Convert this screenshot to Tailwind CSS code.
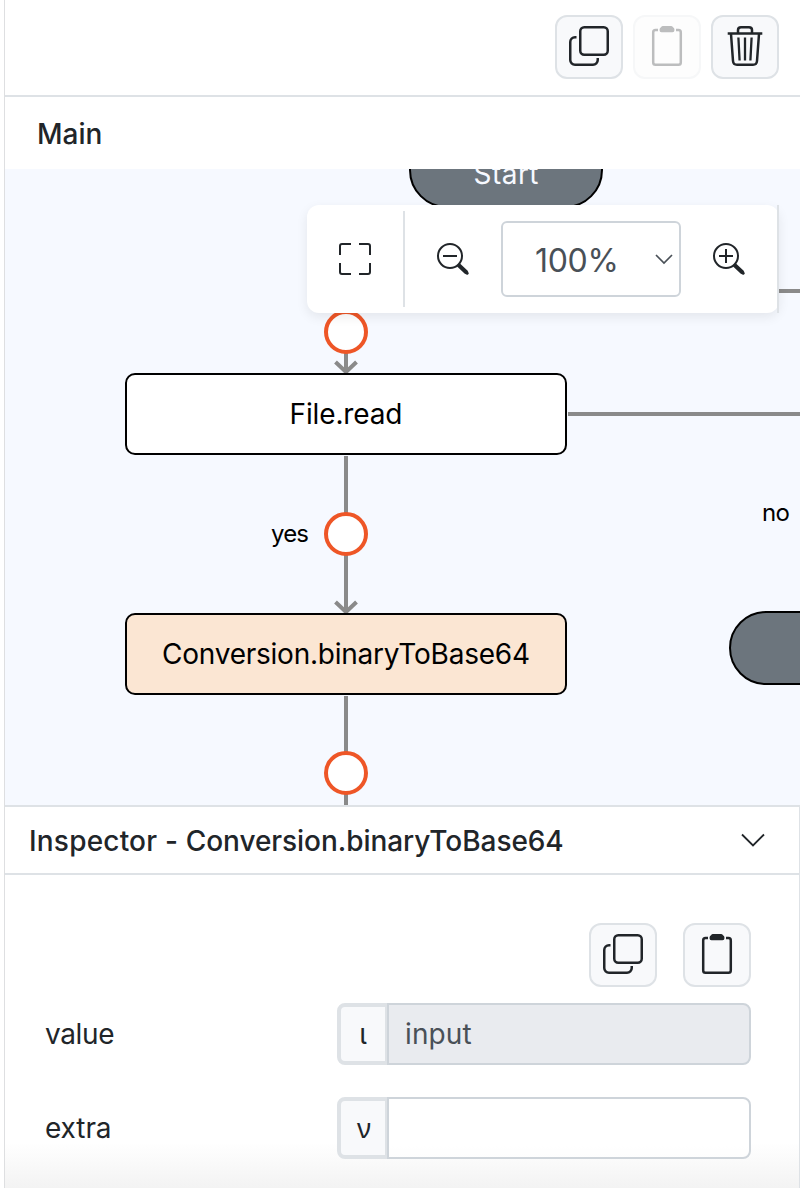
<!DOCTYPE html>
<html lang="en">
<head>
<meta charset="utf-8">
<title>Flow editor</title>
<script src="https://cdn.jsdelivr.net/npm/@tailwindcss/browser@4"></script>
</head>
<body class="bg-white">
<svg class="hidden">
  <defs>
    <symbol id="copy" viewBox="0 0 40 40">
      <g fill="none" stroke="currentColor" stroke-width="2.5">
        <rect x="11.25" y="1.25" width="27.5" height="27.5" rx="4"/>
        <path d="M7.5 11.250H6A4.750 4.750 0 0 0 1.250 16V34A4.750 4.750 0 0 0 6 38.750H24A4.750 4.750 0 0 0 28.750 34V32"/>
      </g>
    </symbol>
    <symbol id="clipboard" viewBox="0 0 40 40">
      <path d="M11 4H8.500Q6.200 4 6.200 6.500V36.500Q6.200 38.750 8.500 38.750H31.500Q33.800 38.750 33.800 36.500V6.500Q33.800 4 31.500 4H29" fill="none" stroke="currentColor" stroke-width="2.500"/>
      <path d="M16 0H24Q25.300 0 26 1.300Q27.500 2 27.500 4Q27.500 6.300 25.500 6.300H14.500Q12.500 6.300 12.500 4Q12.500 2 14 1.300Q14.700 0 16 0Z" fill="currentColor"/>
    </symbol>
  </defs>
</svg>
<div class="flex h-[1188px] w-[800px] overflow-hidden bg-white pl-1 font-[Inter,sans-serif] text-[#212529]">
  <div class="flex w-[796px] flex-col border-l border-[#dedfe1]">
    <header class="flex h-[97px] shrink-0 items-start justify-end gap-2.5 border-b-2 border-[#dee2e6] pt-[15px] pr-[21px]">
      <button class="flex h-16 w-[68px] items-center justify-center rounded-xl border-2 border-[#dee2e6] bg-[#f8f9fb] pb-0.5"><svg class="size-10"><use href="#copy"/></svg></button>
      <button class="flex h-16 w-[68px] items-center justify-center rounded-xl border-2 border-[#f6f7f8] bg-[#fdfdfd] pb-0.5 text-[#bcbdbe]"><svg class="size-10"><use href="#clipboard"/></svg></button>
      <button class="flex h-16 w-[68px] items-center justify-center rounded-xl border-2 border-[#dee2e6] bg-[#f8f9fb] pb-0.5">
        <svg class="size-10" viewBox="0 0 40 40" fill="none" stroke="currentColor" stroke-width="2.500">
          <path d="M2.700 7.600H37.300"/>
          <path d="M13 7.500V4Q13 1.250 16 1.250H24Q27 1.250 27 4V7.500"/>
          <path d="M6 8L8 35Q8.300 38.750 12 38.750H28Q31.700 38.750 32 35L34 8"/>
          <path d="M13.400 11.500L14.600 34.500M20 11.500V34.500M26.600 11.500L25.400 34.500" stroke-width="2.300"/>
        </svg>
      </button>
    </header>
    <div class="flex h-[72px] shrink-0 items-center pt-0.5 pl-8 text-[28px] font-medium">Main</div>

    <main class="relative h-[636px] shrink-0 overflow-hidden bg-[#f6f9ff]">
      <svg class="block" width="795" height="636" viewBox="5 169 795 636" font-family="Inter, sans-serif">
        <rect x="410" y="133" width="192" height="74" rx="37" fill="#6c757d" stroke="#000" stroke-width="2"/>
        <text x="473.500" y="184" font-size="28" fill="#f6f9ff" textLength="65" lengthAdjust="spacing">Start</text>
        <g stroke="#8a8a8a" stroke-width="4" fill="none">
          <path d="M770 291H800M568 414H800"/>
          <path d="M346 350V374M335.500 362L346 372L356.500 362"/>
          <path d="M346 456V614M335.500 602L346 612L356.500 602"/>
          <path d="M346 696V805"/>
        </g>
        <g fill="#fff" stroke="#ee5627" stroke-width="4">
          <circle cx="346" cy="332" r="20"/>
          <circle cx="346" cy="534" r="20"/>
          <circle cx="346" cy="773" r="20"/>
        </g>
        <g stroke="#000" stroke-width="2">
          <rect x="126" y="374" width="440" height="80" rx="9" fill="#fff"/>
          <rect x="126" y="614" width="440" height="80" rx="9" fill="#fbe6d3"/>
          <rect x="730" y="612" width="192" height="72" rx="36" fill="#6c757d"/>
        </g>
        <text x="289.500" y="424" font-size="28" textLength="113" lengthAdjust="spacing">File.read</text>
        <text x="162" y="664" font-size="28" textLength="368" lengthAdjust="spacing">Conversion.binaryToBase64</text>
        <text x="271" y="542" font-size="24" textLength="38" lengthAdjust="spacing">yes</text>
        <text x="762" y="521" font-size="24" textLength="28" lengthAdjust="spacing">no</text>
      </svg>
      <div class="absolute top-9 left-[302px] flex h-[108px] w-[472px] items-center rounded-xl bg-white shadow-[0_4px_12px_rgba(0,0,0,0.08)]">
        <div class="flex h-24 w-[98px] items-center justify-center border-r-2 border-[#dee2e6]">
          <svg class="size-8" viewBox="0 0 32 32" fill="none" stroke="currentColor" stroke-width="2"><path d="M1 12V3Q1 1 3 1H12M20 1H29Q31 1 31 3V12M31 20V29Q31 31 29 31H20M12 31H3Q1 31 1 29V20"/></svg>
        </div>
        <div class="flex w-24 justify-center"><svg class="size-8" viewBox="0 0 32 32" fill="none" stroke="currentColor" stroke-width="2"><circle cx="13" cy="13" r="12"/><path d="M6 13H20"/><path d="M21.500 22L29.800 29.800" stroke-width="4.200"/><path d="M29 29L30.200 30.200" stroke-width="3" stroke-linecap="round"/></svg></div>
        <div class="flex h-[76px] w-[180px] items-center justify-between rounded-md border-2 border-[#ced4da] pr-[6px] pl-8 text-[32px] text-[#495057]"><span class="pt-[3px] tracking-[-0.3px]">100%</span>
          <svg class="h-3 w-[18px]" viewBox="0 0 18 12" fill="none" stroke="#495057" stroke-width="1.700"><path d="M1 2L9 10L17 2"/></svg>
        </div>
        <div class="flex w-24 justify-center"><svg class="size-8" viewBox="0 0 32 32" fill="none" stroke="currentColor" stroke-width="2"><circle cx="13" cy="13" r="12"/><path d="M6 13H20M13 6V20"/><path d="M21.500 22L29.800 29.800" stroke-width="4.200"/><path d="M29 29L30.200 30.200" stroke-width="3" stroke-linecap="round"/></svg></div>
        <div class="absolute top-0 right-0 h-[108px] w-0.5 bg-[#dee2e6]"></div>
      </div>
    </main>

    <section class="flex h-[383px] shrink-0 flex-col border-t-2 border-r border-[#dee2e6] bg-linear-to-b from-white from-[88%] to-[#f3f3f3]">
      <div class="flex h-[68px] shrink-0 items-center justify-between border-b-2 border-[#dee2e6] pr-[34px] pl-6">
        <h2 class="pt-px text-[28px] font-medium whitespace-nowrap"><span class="tracking-[0.2px]">Inspector - </span><span class="tracking-[-0.06px]">Conversion.binaryToBase64</span></h2>
        <svg class="h-3.5 w-6" viewBox="0 0 24 14" fill="none" stroke="currentColor" stroke-width="1.800"><path d="M1 1.500L12 12.500L23 1.500"/></svg>
      </div>
      <div class="flex flex-col pt-12 pr-12 pl-10">
        <div class="flex justify-end gap-[26px]">
          <button class="flex h-16 w-[68px] items-center justify-center rounded-xl border-2 border-[#dee2e6] bg-[#f8f9fb] pb-0.5"><svg class="size-10"><use href="#copy"/></svg></button>
          <button class="flex h-16 w-[68px] items-center justify-center rounded-xl border-2 border-[#dee2e6] bg-[#f8f9fb] pb-0.5"><svg class="size-10"><use href="#clipboard"/></svg></button>
        </div>
        <div class="mt-4 flex h-[62px] items-center">
          <label class="w-[292px] text-[28px] tracking-[-0.35px]">value</label>
          <div class="flex h-[62px] w-[50px] items-center justify-center rounded-l-lg border-4 border-r-2 border-[#dee2e6] bg-[#f8f9fb] text-[28px]">ι</div>
          <div class="flex h-[62px] w-[364px] items-center rounded-r-lg border-2 border-[#ced4da] bg-[#e9ebef] pl-4 text-[28px] tracking-[0.1px] text-[#495057]">input</div>
        </div>
        <div class="mt-8 flex h-[62px] items-center">
          <label class="w-[292px] text-[28px] tracking-[-0.1px]">extra</label>
          <div class="flex h-[62px] w-[50px] items-center justify-center rounded-l-lg border-4 border-r-2 border-[#dee2e6] bg-[#f8f9fb] pl-0.5 font-['Noto_Sans',sans-serif] text-[27px]">ν</div>
          <div class="h-[62px] w-[364px] rounded-r-lg border-2 border-[#ced4da] bg-white/60"></div>
        </div>
      </div>
    </section>
  </div>
</div>
</body>
</html>
